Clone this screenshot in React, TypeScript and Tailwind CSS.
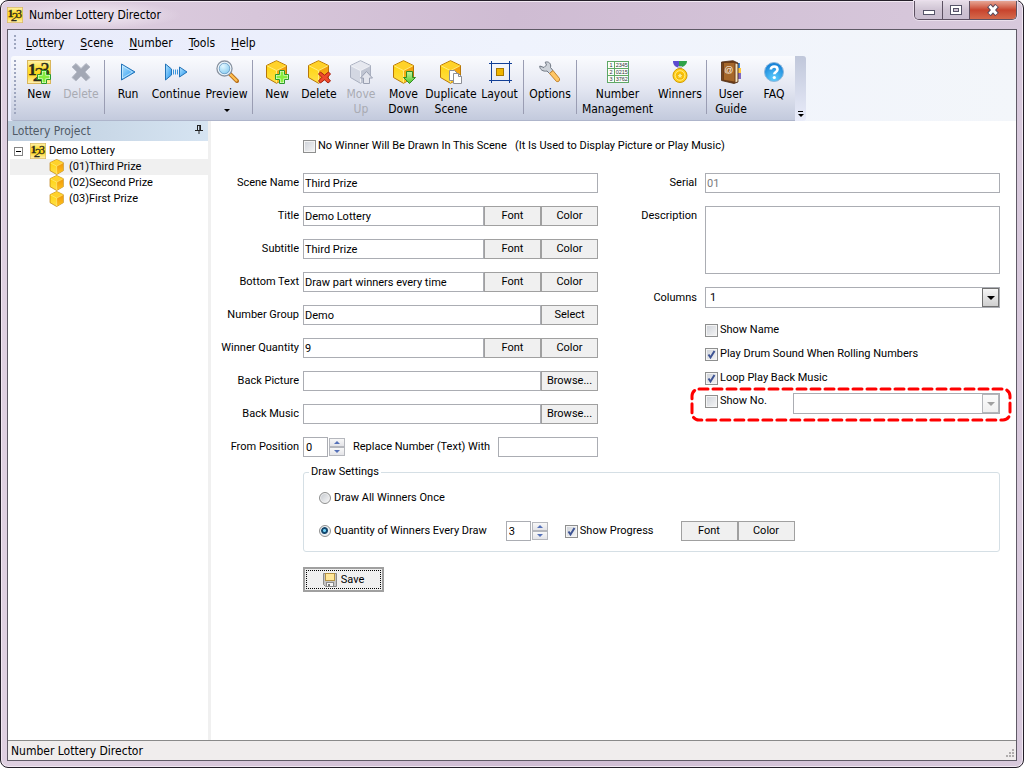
import { useState, type ReactNode } from "react";

const FORM_FONT = "font-[Roboto,'Liberation_Sans',sans-serif]";

/* ---------- Icons ---------- */

function SharedGradients() {
  return (
    <svg width="0" height="0" className="absolute" aria-hidden="true">
      <defs>
        <linearGradient id="playFill" x1="0" y1="0" x2="1" y2="1">
          <stop offset="0" stopColor="#b5e4ff" />
          <stop offset="1" stopColor="#1f93ee" />
        </linearGradient>
        <linearGradient id="goldFill" x1="0" y1="0" x2="0" y2="1">
          <stop offset="0" stopColor="#fff3b0" />
          <stop offset="0.35" stopColor="#ffdd30" />
          <stop offset="0.6" stopColor="#ffd81c" />
          <stop offset="1" stopColor="#fff0b8" />
        </linearGradient>
        <linearGradient id="cubeLeft" x1="0" y1="0" x2="0" y2="1">
          <stop offset="0" stopColor="#ffd000" />
          <stop offset="1" stopColor="#ffe14a" />
        </linearGradient>
        <linearGradient id="cubeRight" x1="0" y1="0" x2="0" y2="1">
          <stop offset="0" stopColor="#f0980a" />
          <stop offset="1" stopColor="#ffc21c" />
        </linearGradient>
        <linearGradient id="greenFill" x1="0" y1="0" x2="0" y2="1">
          <stop offset="0" stopColor="#c5f5a0" />
          <stop offset="1" stopColor="#4fc52b" />
        </linearGradient>
        <radialGradient id="faqFill" cx="0.5" cy="0.85" r="0.8">
          <stop offset="0" stopColor="#5fd0ff" />
          <stop offset="1" stopColor="#147fd6" />
        </radialGradient>
        <radialGradient id="lensFill" cx="0.4" cy="0.35" r="0.7">
          <stop offset="0" stopColor="#e3f7ff" />
          <stop offset="1" stopColor="#6fc0ee" />
        </radialGradient>
      </defs>
    </svg>
  );
}

function AppIcon({ size, plus = false }: { size: number; plus?: boolean }) {
  return (
    <svg width={size} height={size} viewBox="0 0 24 24" aria-hidden="true">
      <rect x="0.5" y="0.5" width="23" height="23" fill="url(#goldFill)" stroke="#d9b65a" />
      <g fontFamily="'Liberation Serif', serif" fill="#2a2a1c" stroke="#2a2a1c" strokeWidth="0.4">
        <text x="1" y="15" fontSize="17" fontWeight="700">1</text>
        <text x="6.500" y="21" fontSize="19" fontStyle="italic">2</text>
        <text x="13.500" y="16" fontSize="18">3</text>
      </g>
      {plus && <Plus />}
    </svg>
  );
}

function Plus() {
  return (
    <g>
      <path d="M14.500 10.500h5v4h4v5h-4v4h-5v-4h-4v-5h4z" fill="#f4fff0" stroke="#2a9a2a" />
      <path d="M15.500 11.500h3v4h4v3h-4v4h-3v-4h-4v-3h4z" fill="#86ee3e" />
    </g>
  );
}

function Cube({ size = 24, gray = false, children }: { size?: number; gray?: boolean; children?: ReactNode }) {
  const c = gray
    ? { top: "#e6e8ef", left: "#d3d7e2", right: "#c0c5d2", edge: "#a9afbf", hi: "#f3f4f8" }
    : { top: "#ffd22a", left: "url(#cubeLeft)", right: "url(#cubeRight)", edge: "#b87708", hi: "#fff08a" };
  return (
    <svg width={size} height={size} viewBox="0 0 24 24" aria-hidden="true">
      <path d="M11.500 0.700L21.500 5.500V17.500L11.500 23.300L1.500 17.500V5.500z" fill={c.left} stroke={c.edge} />
      <path d="M11.500 1.300L21 5.800L11.500 10.600L2 5.800z" fill={c.top} />
      <path d="M11.500 10.600L21 5.800V17.200L11.500 22.700z" fill={c.right} />
      <path d="M2.300 6L11.500 10.600L20.700 6M11.500 10.600V22.500" fill="none" stroke={c.hi} strokeWidth="0.900" />
      {children}
    </svg>
  );
}

function Play() {
  return (
    <svg width="24" height="24" viewBox="0 0 24 24" aria-hidden="true">
      <path d="M5.500 4L19 12L5.500 20z" fill="url(#playFill)" stroke="#2373b8" strokeLinejoin="round" />
      <path d="M6.500 6L16.500 12L6.500 18z" fill="none" stroke="#d5f0ff" strokeWidth="0.700" />
    </svg>
  );
}

function Continue() {
  return (
    <svg width="24" height="24" viewBox="0 0 24 24" aria-hidden="true">
      <path d="M1.500 4L7.500 9V15L1.500 20z" fill="url(#playFill)" stroke="#2373b8" strokeLinejoin="round" />
      <path d="M9.500 9.500v5M11.500 9.500v5M13.500 9.500v5" stroke="#3a96dd" />
      <path d="M15.500 7L23 12L15.500 17z" fill="url(#playFill)" stroke="#2373b8" strokeLinejoin="round" />
    </svg>
  );
}

function Magnifier() {
  return (
    <svg width="24" height="24" viewBox="0 0 24 24" aria-hidden="true">
      <path d="M14.500 13.500L22 21" stroke="#b8701c" strokeWidth="4" strokeLinecap="round" />
      <path d="M15.500 14.500L21.500 20.500" stroke="#ffc052" strokeWidth="2.200" strokeLinecap="round" />
      <circle cx="9.500" cy="8.500" r="7.500" fill="url(#lensFill)" stroke="#8c93a0" strokeWidth="1.400" />
      <circle cx="9.500" cy="8.500" r="6.200" fill="none" stroke="#f4f8fb" strokeWidth="1.300" />
      <circle cx="9.500" cy="8.500" r="5.300" fill="none" stroke="#5f8db8" strokeWidth="0.700" />
    </svg>
  );
}

function GrayCross() {
  return (
    <svg width="24" height="24" viewBox="0 0 24 24" aria-hidden="true">
      <path
        d="M7 3.500L12 8.500L17 3.500L21 7L16 12L21 17.500L17 21L12 16L7 21L3 17.500L8 12L3 7z"
        fill="#a3a8b5"
        stroke="#b8bcc8"
      />
    </svg>
  );
}

function LayoutIcon() {
  return (
    <svg width="24" height="24" viewBox="0 0 24 24" aria-hidden="true">
      <path d="M3.500 1v22M21.500 1v22M1 3.500h23M1 20.500h23" stroke="#123f96" />
      <rect x="8.500" y="8.500" width="7" height="7" fill="#efb400" stroke="#a87800" />
    </svg>
  );
}

function Wrench() {
  return (
    <svg width="24" height="24" viewBox="0 0 24 24" aria-hidden="true">
      <path
        d="M1.800 6L6 7.500L8.500 5L7.200 2.200C10.500 1 13.500 3.500 12.500 7.500L15 10.500L11.500 13.500L9 11C5 11.800 1.500 9.500 1.800 6z"
        fill="#cdd2d9"
        stroke="#6e7681"
      />
      <path d="M11.500 13.500L15 10.500L21.500 18.500C22 21 20.500 22 18.500 21.500z" fill="#ffc665" stroke="#c08331" />
    </svg>
  );
}

function NumberTable() {
  return (
    <svg width="24" height="24" viewBox="0 0 24 24" aria-hidden="true">
      <rect x="1.500" y="1.500" width="21" height="21" fill="#fbfffa" stroke="#5fa866" />
      <path d="M1.500 8.500h21M1.500 15.500h21M8.500 1.500v21" stroke="#5fa866" />
      <g fontFamily="'Liberation Sans', sans-serif" fontSize="5.500" fill="#33333d">
        <text x="3.500" y="7">1</text>
        <text x="9.700" y="7">2345</text>
        <text x="3.500" y="14">2</text>
        <text x="9.700" y="14">0215</text>
        <text x="3.500" y="21">3</text>
        <text x="9.700" y="21">3762</text>
      </g>
    </svg>
  );
}

function Medal() {
  return (
    <svg width="24" height="24" viewBox="0 0 24 24" aria-hidden="true">
      <path d="M5 1H11V7.500C7.500 7.500 5 5 5 1z" fill="#5d4bd0" />
      <path d="M11 1H19C19 5 15 7.500 11 7.500z" fill="#2fa24a" />
      <path d="M10 6h4v3h-4z" fill="#b9bcc6" />
      <circle cx="12" cy="15.500" r="7" fill="#ffd21f" stroke="#d29a00" />
      <circle cx="12" cy="15.500" r="4.800" fill="#ffc400" stroke="#fff0a0" strokeWidth="0.800" />
      <path d="M12 12.200l1 2.200 2.400.3-1.800 1.600.5 2.400-2.100-1.200-2.100 1.200.5-2.400-1.800-1.600 2.400-.3z" fill="#fff08a" stroke="#d79b00" strokeWidth="0.500" />
    </svg>
  );
}

function Guide() {
  return (
    <svg width="24" height="24" viewBox="0 0 24 24" aria-hidden="true">
      <path d="M18 3h3v5h-3z" fill="#3c88d8" />
      <path d="M18 8h4v5h-4z" fill="#ffc83a" />
      <path d="M18 13h4v6h-4z" fill="#8068c0" />
      <path d="M2.500 2L14 0.700L19 3V22L15 23.500L2.500 20.500z" fill="#6d3d18" stroke="#4d2a10" strokeWidth="0.800" />
      <path d="M16.500 3.500L18.500 4V21.500L16.500 22.300z" fill="#f6e6c2" />
      <path d="M3.500 3H15.500V21.500L3.500 19.500z" fill="#a5672a" />
      <path d="M3.500 3h1.500v17l-1.500-.3z" fill="#6d3d18" />
      <text x="5.300" y="13" fontSize="9" fontFamily="'Liberation Sans', sans-serif" fill="#fff6e4">@</text>
    </svg>
  );
}

function Faq() {
  return (
    <svg width="24" height="24" viewBox="0 0 24 24" aria-hidden="true">
      <circle cx="12" cy="12" r="9.500" fill="url(#faqFill)" stroke="#8fb8dc" />
      <path
        d="M8.800 9.500C8.800 5.500 15.500 5.500 15.500 9.500C15.500 12 12.300 12 12.300 14.300"
        fill="none"
        stroke="#fff"
        strokeWidth="2.600"
      />
      <circle cx="12.300" cy="17.500" r="1.600" fill="#fff" />
    </svg>
  );
}

function Floppy() {
  return (
    <svg width="14" height="14" viewBox="0 0 14 14" aria-hidden="true">
      <path d="M0.500 0.500h13v13h-11l-2-2z" fill="#c4c4c4" stroke="#8b8b8b" />
      <rect x="2.500" y="0.500" width="9" height="7" fill="#ffe79a" stroke="#b59242" />
      <rect x="3.500" y="9.500" width="7" height="4" fill="#f4f4f4" stroke="#8b8b8b" />
      <rect x="5" y="11" width="2" height="2" fill="#777" />
    </svg>
  );
}

/* ---------- Window chrome ---------- */

function TitleBar() {
  const btn = "flex h-[18px] items-center justify-center border-r border-[#5d5162] bg-linear-to-b from-[#e6dde8] via-[#cfc3d3] to-[#c9bdcf]";
  return (
    <header className="flex h-7 items-start justify-between">
      <div className="flex h-7 items-center gap-[6px] bg-[radial-gradient(closest-side,#e9deeb_40%,transparent)] pr-5 text-xs text-black">
        <AppIcon size={16} />
        <h1>Number Lottery Director</h1>
      </div>
      <div className="flex overflow-hidden rounded-b-[5px] border border-t-0 border-[#5d5162] shadow-[0_0_0_1px_#eadfec]">
        <button type="button" aria-label="Minimize" className={`${btn} w-[28px]`}>
          <span className="mt-1 h-[5px] w-3 border border-[#555468] bg-white" />
        </button>
        <button type="button" aria-label="Maximize" className={`${btn} w-[27px]`}>
          <span className="grid h-[10px] w-3 place-items-center border border-[#555468] bg-white">
            <span className="h-1 w-[6px] border border-[#555468] bg-[#cfc3d3]" />
          </span>
        </button>
        <button
          type="button"
          aria-label="Close"
          className="flex h-[18px] w-[46px] items-center justify-center bg-linear-to-b from-[#e5a595] via-[#c8432d] to-[#d4694c]"
        >
          <svg width="14" height="12" viewBox="0 0 14 12" aria-hidden="true">
            <path d="M3 1.500L11 10.500M11 1.500L3 10.500" stroke="#53465a" strokeWidth="5" />
            <path d="M3.500 2L10.500 10M10.500 2L3.500 10" stroke="#fff" strokeWidth="3" />
          </svg>
        </button>
      </div>
    </header>
  );
}

function Grip({ className }: { className: string }) {
  return <span className={`w-[2px] bg-[repeating-linear-gradient(#9ea6bf_0_2px,transparent_2px_4px)] ${className}`} />;
}

function MenuBar() {
  return (
    <nav className="flex h-[26px] items-center pl-[6px] text-xs">
      <Grip className="mr-[10px] h-4" />
      <div className="flex gap-4">
        {["Lottery", "Scene", "Number", "Tools", "Help"].map((m) => (
          <button type="button" key={m}>
            <span className="underline underline-offset-2">{m[0]}</span>
            {m.slice(1)}
          </button>
        ))}
      </div>
    </nav>
  );
}

function Tool({ icon, label, width, disabled, menu }: { icon: ReactNode; label: string; width: string; disabled?: boolean; menu?: boolean }) {
  return (
    <button
      type="button"
      disabled={disabled}
      className={`flex shrink-0 flex-col items-center pt-1 text-xs leading-[15px] disabled:text-[#a9abb3] ${width}`}
    >
      <span className="mb-[3px] h-6">{icon}</span>
      <span className="text-center">{label}</span>
      {menu && <span className="mt-[7px] border-x-[3px] border-t-[3px] border-x-transparent border-t-black" />}
    </button>
  );
}

function Divider() {
  return <span className="mx-[2px] mt-1 h-[54px] w-px shrink-0 bg-[#9a9db3]" />;
}

function Toolbar() {
  return (
    <div className="flex h-[65px] pl-[3px]">
      <div className="flex rounded-l-[3px] border-b border-[#aeb5cb] bg-linear-to-b from-[#fafbfe] via-[#e4e7f2] to-[#c3cadd] pl-[3px]">
        <Grip className="mr-[2px] mt-1 h-[56px]" />
        <Tool width="w-[42px]" icon={<AppIcon size={24} plus />} label="New" />
        <Tool width="w-[42px]" icon={<GrayCross />} label="Delete" disabled />
        <Divider />
        <Tool width="w-[42px]" icon={<Play />} label="Run" />
        <Tool width="w-[54px]" icon={<Continue />} label="Continue" />
        <Tool width="w-[47px]" icon={<Magnifier />} label="Preview" menu />
        <Divider />
        <Tool width="w-[44px]" icon={<Cube><Plus /></Cube>} label="New" />
        <Tool
          width="w-[40px]"
          icon={
            <Cube>
              <path d="M13.500 12L17.500 15.200L21.500 12L23.500 14L20.500 17.300L23.500 21L21 23L17.500 19.800L13.500 23L11.500 21L14.800 17.300L11.500 14z" fill="#ee4a2d" stroke="#a8200f" />
            </Cube>
          }
          label="Delete"
        />
        <Tool
          width="w-[44px]"
          disabled
          icon={
            <Cube gray>
              <path d="M17.500 11.500L23.500 18H20.500V23.500H14.500V18H11.500z" fill="#e3e5ed" stroke="#9aa0b2" />
            </Cube>
          }
          label="Move Up"
        />
        <Tool
          width="w-[41px]"
          icon={
            <Cube>
              <path d="M14.500 11.500H20.500V17.500H23.500L17.500 23.500L11.500 17.500H14.500z" fill="url(#greenFill)" stroke="#2f8d23" />
            </Cube>
          }
          label="Move Down"
        />
        <Tool
          width="w-[54px]"
          icon={
            <Cube>
              <path d="M10.500 10.500h5l3 3v7h-8z" fill="#fff" stroke="#8d8f96" />
              <path d="M14.500 13.500h5l3 3v7h-8z" fill="#fff" stroke="#8d8f96" />
              <path d="M19.500 13.500v3h3" fill="none" stroke="#8d8f96" />
            </Cube>
          }
          label="Duplicate Scene"
        />
        <Tool width="w-[43px]" icon={<LayoutIcon />} label="Layout" />
        <Divider />
        <Tool width="w-[48px]" icon={<Wrench />} label="Options" />
        <Divider />
        <Tool width="w-[77px]" icon={<NumberTable />} label="Number Management" />
        <Tool width="w-[48px]" icon={<Medal />} label="Winners" />
        <Divider />
        <Tool width="w-[44px]" icon={<Guide />} label="User Guide" />
        <Tool width="w-[42px]" icon={<Faq />} label="FAQ" />
      </div>
      <button
        type="button"
        aria-label="Toolbar options"
        className="flex w-[11px] flex-col items-center justify-end rounded-r-[3px] bg-linear-to-b from-[#c0c7da] to-[#e9ecfa] pb-1"
      >
        <span className="mb-[2px] h-px w-[5px] bg-black" />
        <span className="border-x-[3px] border-t-[3px] border-x-transparent border-t-black" />
      </button>
    </div>
  );
}

/* ---------- Project tree ---------- */

function ProjectPanel({ selected, onSelect }: { selected: number; onSelect: (i: number) => void }) {
  const scenes = ["(01)Third Prize", "(02)Second Prize", "(03)First Prize"];
  return (
    <aside className="flex w-[200px] shrink-0 flex-col bg-white">
      <div className="flex h-5 items-center justify-between bg-linear-to-r from-[#bdcddd] to-[#d6e4f2] pl-1 pr-[5px] text-xs text-[#505a66]">
        <h2>Lottery Project</h2>
        <svg width="8" height="9" viewBox="0 0 8 9" aria-label="Pin panel" className="mb-1">
          <path d="M2 0.500h4M2.500 0v5M5.500 0v5M4.800 0v5M0 5.500h8M4 6v3" stroke="#222" fill="none" />
        </svg>
      </div>
      <div className={`pl-[2px] pt-[2px] text-[11px] ${FORM_FONT}`}>
        <div className="flex h-4 items-center pl-1">
          <button type="button" aria-label="Collapse" className="mr-[7px] grid size-[9px] place-items-center border border-[#848484]">
            <span className="h-px w-[5px] bg-black" />
          </button>
          <AppIcon size={16} />
          <span className="ml-[3px]">Demo Lottery</span>
        </div>
        {scenes.map((s, i) => (
          <button
            type="button"
            key={s}
            onClick={() => onSelect(i)}
            className={`flex h-4 w-full items-center gap-1 pl-[39px] ${i === selected ? "bg-[#f0f0f0]" : ""}`}
          >
            <Cube size={16} />
            {s}
          </button>
        ))}
      </div>
    </aside>
  );
}

/* ---------- Form controls ---------- */

const BORDER = "border border-[#abadb3]";

function TextField({ id, value = "", disabled, className = "min-w-0 flex-1" }: { id: string; value?: string; disabled?: boolean; className?: string }) {
  return (
    <input
      id={id}
      type="text"
      defaultValue={value}
      disabled={disabled}
      className={`h-5 bg-white pl-px outline-none disabled:text-[#7c7c7c] ${BORDER} ${className}`}
    />
  );
}

function PushButton({ children }: { children: ReactNode }) {
  return (
    <button type="button" className="h-5 w-[57px] shrink-0 border border-[#a0a0a0] bg-[#f0f0f0] text-center">
      {children}
    </button>
  );
}

function FontColor() {
  return (
    <div className="flex">
      <PushButton>Font</PushButton>
      <PushButton>Color</PushButton>
    </div>
  );
}

function Row({ id, label, children }: { id: string; label: string; children: ReactNode }) {
  return (
    <div className="flex items-center">
      <label htmlFor={id} className="w-[87px] shrink-0 pr-1 text-right whitespace-nowrap">
        {label}
      </label>
      <div className="flex min-w-0 flex-1 items-center">{children}</div>
    </div>
  );
}

function Check({ label, checked }: { label: string; checked?: boolean }) {
  return (
    <label className="flex items-center gap-[2px] whitespace-nowrap">
      <span className="grid size-[13px] shrink-0">
        <input
          type="checkbox"
          defaultChecked={checked}
          className="peer col-start-1 row-start-1 size-[13px] appearance-none border border-[#8e8f8f] bg-linear-to-br from-[#cdd1d8] to-[#f6f6f6] shadow-[inset_0_0_0_1px_#f4f4f4]"
        />
        <svg viewBox="0 0 13 13" className="pointer-events-none invisible col-start-1 row-start-1 size-[13px] peer-checked:visible" aria-hidden="true">
          <path d="M3.500 6.500L5.500 9.500L9.500 3" fill="none" stroke="#3e5494" strokeWidth="2" />
        </svg>
      </span>
      {label}
    </label>
  );
}

function Radio({ label, checked }: { label: string; checked?: boolean }) {
  return (
    <label className="flex items-center gap-[3px] whitespace-nowrap">
      <input
        type="radio"
        name="draw"
        defaultChecked={checked}
        className="size-3 appearance-none rounded-full border border-[#8e8f8f] bg-linear-to-br from-[#c3c7cd] to-[#fafafa] shadow-[inset_0_0_0_1px_#f0f0f0] checked:bg-[radial-gradient(circle_at_45%_45%,#6fd0f5_0_1px,#15486e_2px_3px,#e8edf2_4px)]"
      />
      {label}
    </label>
  );
}

function Spinner({ id, value, label }: { id: string; value: number; label?: string }) {
  const [n, setN] = useState(value);
  const half = "grid h-[9px] w-4 place-items-center border border-[#b5b7bd] bg-linear-to-b from-[#f8f8f8] to-[#e4e4e8]";
  return (
    <div className="flex items-center gap-px">
      <input
        id={id}
        type="text"
        aria-label={label}
        value={n}
        onChange={(e) => setN(Number(e.target.value) || 0)}
        className={`h-5 w-[25px] bg-white pl-[2px] outline-none ${BORDER}`}
      />
      <div className="flex flex-col">
        <button type="button" aria-label="Increase" className={half} onClick={() => setN(n + 1)}>
          <span className="border-x-[3px] border-b-[3px] border-x-transparent border-b-[#5571b8]" />
        </button>
        <button type="button" aria-label="Decrease" className={half} onClick={() => setN(Math.max(0, n - 1))}>
          <span className="border-x-[3px] border-t-[3px] border-x-transparent border-t-[#5571b8]" />
        </button>
      </div>
    </div>
  );
}

function Dropdown({ id, label, options, disabled }: { id: string; label?: string; options: string[]; disabled?: boolean }) {
  return (
    <div className="grid min-w-0 flex-1 items-center">
      <select
        id={id}
        aria-label={label}
        disabled={disabled}
        className={`col-start-1 row-start-1 h-[21px] w-full appearance-none bg-white pl-1 outline-none ${BORDER}`}
      >
        {options.map((o) => (
          <option key={o}>{o}</option>
        ))}
      </select>
      <span
        className={`pointer-events-none col-start-1 row-start-1 mr-px grid h-[19px] w-[17px] place-items-center justify-self-end border bg-linear-to-b ${
          disabled ? "border-[#b4b6ba] from-[#fbfbfb] to-[#f0f0f0]" : "border-[#707070] from-[#f6f6f6] to-[#cfcfcf]"
        }`}
      >
        <span className={`border-x-4 border-t-4 border-x-transparent ${disabled ? "border-t-[#a0a0a0]" : "border-t-black"}`} />
      </span>
    </div>
  );
}

function SceneForm() {
  return (
    <form className="px-[5px] pt-[17px] text-[11px] leading-[16px] text-black" onSubmit={(e) => e.preventDefault()}>
      <div className="flex pl-[87px]">
        <Check label="No Winner Will Be Drawn In This Scene&nbsp;&nbsp; (It Is Used to Display Picture or Play Music)" />
      </div>
      <div className="mt-[19px] grid grid-cols-[382fr_383fr] gap-x-[19px] pr-[11px]">
        <div className="flex flex-col gap-[13px]">
          <Row id="scene-name" label="Scene Name">
            <TextField id="scene-name" value="Third Prize" />
          </Row>
          <Row id="title" label="Title">
            <TextField id="title" value="Demo Lottery" />
            <FontColor />
          </Row>
          <Row id="subtitle" label="Subtitle">
            <TextField id="subtitle" value="Third Prize" />
            <FontColor />
          </Row>
          <Row id="bottom-text" label="Bottom Text">
            <TextField id="bottom-text" value="Draw part winners every time" />
            <FontColor />
          </Row>
          <Row id="number-group" label="Number Group">
            <TextField id="number-group" value="Demo" />
            <PushButton>Select</PushButton>
          </Row>
          <Row id="winner-quantity" label="Winner Quantity">
            <TextField id="winner-quantity" value="9" />
            <FontColor />
          </Row>
          <Row id="back-picture" label="Back Picture">
            <TextField id="back-picture" />
            <PushButton>Browse...</PushButton>
          </Row>
          <Row id="back-music" label="Back Music">
            <TextField id="back-music" />
            <PushButton>Browse...</PushButton>
          </Row>
          <Row id="from-position" label="From Position">
            <Spinner id="from-position" value={0} />
            <label htmlFor="replace" className="ml-2 flex-1 whitespace-nowrap">Replace Number (Text) With</label>
            <TextField id="replace" className="w-[100px]" />
          </Row>
        </div>

        <div className="flex flex-col">
          <div className="flex items-center">
            <label htmlFor="serial" className="w-[88px] shrink-0 pr-2 text-right">Serial</label>
            <TextField id="serial" value="01" disabled />
          </div>
          <div className="mt-[13px] flex">
            <label htmlFor="description" className="w-[88px] shrink-0 pt-[2px] pr-2 text-right">Description</label>
            <textarea id="description" className={`h-[68px] min-w-0 flex-1 resize-none bg-white outline-none ${BORDER}`} />
          </div>
          <div className="mt-[13px] flex items-center">
            <label htmlFor="columns" className="w-[88px] shrink-0 pr-2 text-right">Columns</label>
            <Dropdown id="columns" options={["1", "2", "3"]} />
          </div>
          <div className="mt-[14px] flex flex-col gap-2 pl-[88px]">
            <Check label="Show Name" />
            <Check label="Play Drum Sound When Rolling Numbers" checked />
            <Check label="Loop Play Back Music" checked />
          </div>
          <div className="relative mt-[7px] flex items-start pl-[88px]">
            <div className="w-[88px] shrink-0">
              <Check label="Show No." />
            </div>
            <Dropdown id="show-no" label="Number display" options={[""]} disabled />
            <svg className="pointer-events-none absolute -top-[6px] -right-3 left-[73px] h-[35px] w-[calc(100%-61px)]" aria-hidden="true">
              <rect x="2" y="2" rx="7" className="h-[calc(100%-4px)] w-[calc(100%-4px)]" fill="none" stroke="#f00" strokeWidth="3" strokeDasharray="9 5" strokeLinecap="round" />
            </svg>
          </div>
        </div>
      </div>

      <fieldset className="mt-[7px] mr-[11px] ml-[87px] rounded-[3px] border border-[#d5dfe5] pb-[10px] pl-[15px]">
        <legend className="-ml-[10px] px-[2px]">Draw Settings</legend>
        <div className="mt-[10px]">
          <Radio label="Draw All Winners Once" />
        </div>
        <div className="mt-[15px] flex items-center">
          <Radio label="Quantity of Winners Every Draw" checked />
          <div className="mr-[17px] ml-[19px]">
            <Spinner id="draw-quantity" value={3} label="Winners per draw" />
          </div>
          <Check label="Show Progress" checked />
          <div className="ml-[27px]">
            <FontColor />
          </div>
        </div>
      </fieldset>

      <button type="submit" className="mt-[15px] ml-[87px] h-[25px] w-[81px] border-2 border-[#a0a0a0] bg-[#f0f0f0] p-px">
        <span className="flex h-full items-center justify-center gap-1 border border-dotted border-black">
          <Floppy />
          Save
        </span>
      </button>
    </form>
  );
}

export default function App() {
  const [selected, setSelected] = useState(0);
  return (
    <div className="flex min-h-screen flex-col rounded-lg border border-[#241f29] bg-linear-to-r from-[#dfd0e1] via-[#cfbcd3] to-[#d8c9dc] px-[6px] pb-[6px] font-['DejaVu_Sans_Condensed','Noto_Sans',sans-serif] text-black shadow-[inset_0_0_0_1px_#f1e8f2]">
      <SharedGradients />
      <TitleBar />
      <div className="flex flex-1 flex-col border border-[#5f5a66] bg-white">
        <div className="bg-linear-to-r from-[#e8ebfb] via-[#eff3fd] to-[#f3f6fa]">
          <MenuBar />
          <Toolbar />
        </div>
        <div className="flex flex-1">
          <ProjectPanel selected={selected} onSelect={setSelected} />
          <div className="w-[3px] shrink-0 bg-[#f0f0f0]" />
          <main className={`min-w-0 flex-1 bg-white ${FORM_FONT}`}>
            <SceneForm />
          </main>
        </div>
        <footer className="flex h-5 items-center justify-between border-t border-[#8a8a8a] bg-[#f0eded] pl-[3px] text-xs">
          <span>Number Lottery Director</span>
          <svg width="11" height="11" viewBox="0 0 11 11" aria-hidden="true" className="mt-2">
            <g fill="#b0adad">
              <rect x="7" y="0" width="2" height="2" />
              <rect x="4" y="3" width="2" height="2" />
              <rect x="7" y="3" width="2" height="2" />
              <rect x="1" y="6" width="2" height="2" />
              <rect x="4" y="6" width="2" height="2" />
              <rect x="7" y="6" width="2" height="2" />
            </g>
          </svg>
        </footer>
      </div>
    </div>
  );
}
